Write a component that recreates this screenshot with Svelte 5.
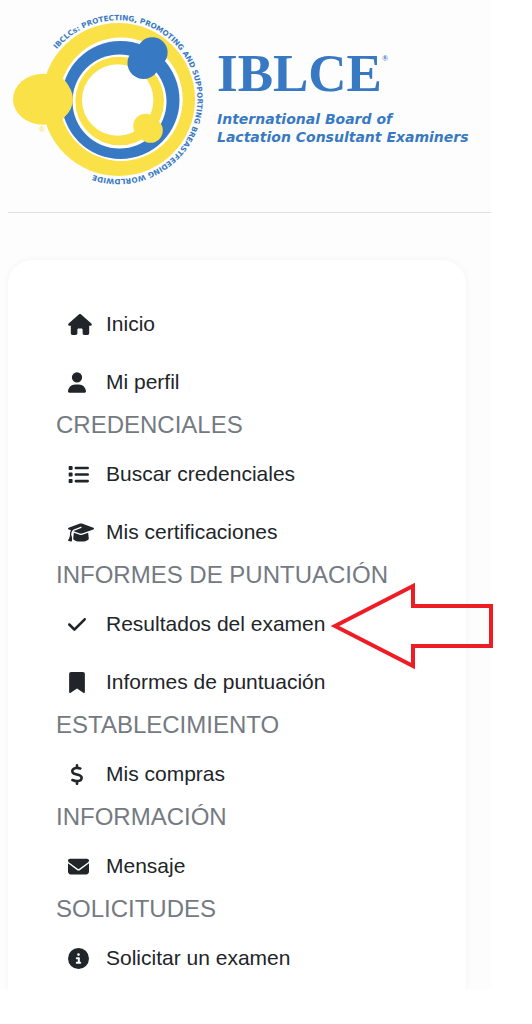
<script>
  const icons = {
    house: { w: 576, d: "M575.8 255.5c0 18-15 32.1-32 32.1h-32l.7 160.2c0 2.7-.2 5.4-.5 8.1V472c0 22.1-17.9 40-40 40H456c-1.1 0-2.2 0-3.3-.1c-1.4 .1-2.8 .1-4.2 .1H416 392c-22.1 0-40-17.9-40-40V448 384c0-17.7-14.3-32-32-32H256c-17.7 0-32 14.3-32 32v64 24c0 22.1-17.9 40-40 40H160 128.1c-1.5 0-3-.1-4.5-.2c-1.2 .1-2.4 .2-3.6 .2H104c-22.1 0-40-17.9-40-40V360c0-.9 0-1.9 .1-2.8V287.6H32c-18 0-32-14-32-32.1c0-9 3-17 10-24L266.4 8c7-7 15-8 22-8s15 2 21 7L564.8 231.5c8 7 12 15 11 24z" },
    user: { w: 448, d: "M224 256A128 128 0 1 0 224 0a128 128 0 1 0 0 256zm-45.7 48C79.8 304 0 383.8 0 482.3C0 498.7 13.3 512 29.7 512H418.3c16.4 0 29.7-13.3 29.7-29.7C448 383.8 368.2 304 269.7 304H178.3z" },
    list: { w: 512, d: "M40 48C26.7 48 16 58.7 16 72v48c0 13.3 10.7 24 24 24H88c13.3 0 24-10.7 24-24V72c0-13.3-10.7-24-24-24H40zM192 64c-17.7 0-32 14.3-32 32s14.3 32 32 32H480c17.7 0 32-14.3 32-32s-14.3-32-32-32H192zm0 160c-17.7 0-32 14.3-32 32s14.3 32 32 32H480c17.7 0 32-14.3 32-32s-14.3-32-32-32H192zm0 160c-17.7 0-32 14.3-32 32s14.3 32 32 32H480c17.7 0 32-14.3 32-32s-14.3-32-32-32H192zM16 232v48c0 13.3 10.7 24 24 24H88c13.3 0 24-10.7 24-24V232c0-13.3-10.7-24-24-24H40c-13.3 0-24 10.7-24 24zM40 368c-13.3 0-24 10.7-24 24v48c0 13.3 10.7 24 24 24H88c13.3 0 24-10.7 24-24V392c0-13.3-10.7-24-24-24H40z" },
    cap: { w: 640, d: "M320 32c-8.1 0-16.1 1.4-23.7 4.1L15.8 137.4C6.3 140.9 0 149.9 0 160s6.3 19.1 15.8 22.6l57.9 20.9C57.3 229.3 48 259.8 48 291.9v28.1c0 28.4-10.8 57.7-22.3 80.8c-6.5 13-13.9 25.8-22.5 37.6C0 442.7-.9 448.3 .9 453.4s6 8.9 11.2 10.2l64 16c4.2 1.1 8.7 .3 12.4-2s6.3-6.1 7.1-10.4c8.6-42.8 4.3-81.2-2.1-108.7C90.3 344.3 86 329.8 80 316.5V291.9c0-30.2 10.2-58.7 27.9-81.5c12.9-15.5 29.6-28 49.2-35.7l157-61.7c8.2-3.2 17.5 .8 20.7 9s-.8 17.5-9 20.7l-157 61.7c-12.4 4.9-23.3 12.4-32.2 21.6l159.6 57.6c7.6 2.7 15.6 4.1 23.7 4.1s16.1-1.4 23.7-4.1L624.2 182.6c9.5-3.4 15.8-12.5 15.8-22.6s-6.3-19.1-15.8-22.6L343.7 36.1C336.1 33.4 328.1 32 320 32zM128 408c0 35.3 86 72 192 72s192-36.7 192-72L496.7 262.6 354.5 314c-11.1 4-22.8 6-34.5 6s-23.5-2-34.5-6L143.3 262.6 128 408z" },
    check: { w: 448, d: "M438.6 105.4c12.5 12.5 12.5 32.8 0 45.3l-256 256c-12.5 12.5-32.8 12.5-45.3 0l-128-128c-12.5-12.5-12.5-32.8 0-45.3s32.8-12.5 45.3 0L160 338.7 393.4 105.4c12.5-12.5 32.8-12.5 45.3 0z" },
    bookmark: { w: 384, d: "M0 48V487.7C0 501.1 10.9 512 24.3 512c5 0 9.9-1.5 14-4.4L192 400 345.7 507.6c4.1 2.9 9 4.4 14 4.4c13.4 0 24.3-10.9 24.3-24.3V48c0-26.5-21.5-48-48-48H48C21.5 0 0 21.5 0 48z" },
    dollar: { w: 320, d: "M160 0c17.7 0 32 14.3 32 32V67.7c1.6 .2 3.1 .4 4.7 .7c.4 .1 .7 .1 1.1 .2l48 8.8c17.4 3.2 28.9 19.9 25.7 37.2s-19.9 28.9-37.2 25.7l-47.5-8.7c-31.3-4.6-58.9-1.5-78.3 6.2s-27.2 18.3-29 28.1c-2 10.7-.5 16.7 1.2 20.4c1.8 3.9 5.5 8.3 12.8 13.2c16.3 10.7 41.3 17.7 73.7 26.3l2.9 .8c28.6 7.6 63.6 16.8 89.6 33.8c14.2 9.3 27.6 21.9 35.9 39.5c8.5 17.9 10.3 37.9 6.4 59.2c-6.9 38-33.1 63.4-65.6 76.7c-13.7 5.6-28.6 9.2-44.4 11V480c0 17.7-14.3 32-32 32s-32-14.3-32-32V445.1c-.4-.1-.9-.1-1.3-.2l-.2 0 0 0c-24.4-3.8-64.5-14.3-91.5-26.3c-16.1-7.2-23.4-26.1-16.2-42.2s26.1-23.4 42.2-16.2c20.9 9.3 55.3 18.5 75.2 21.6c31.9 4.7 58.2 2 76-5.3c16.9-6.9 24.6-16.9 26.8-28.9c1.9-10.6 .4-16.7-1.3-20.4c-1.9-4-5.6-8.4-13-13.3c-16.4-10.7-41.5-17.7-74-26.3l-2.8-.7 0 0C119.4 279.3 84.4 270 58.4 253c-14.2-9.3-27.5-22-35.8-39.6c-8.4-17.9-10.1-37.9-6.1-59.2C23.7 116 52.3 91.2 84.8 78.3c13.3-5.3 27.9-8.9 43.2-11V32c0-17.7 14.3-32 32-32z" },
    envelope: { w: 512, d: "M48 64C21.5 64 0 85.5 0 112c0 15.1 7.1 29.3 19.2 38.4L236.8 313.6c11.4 8.5 27 8.5 38.4 0L492.8 150.4c12.1-9.1 19.2-23.3 19.2-38.4c0-26.5-21.5-48-48-48H48zM0 176V384c0 35.3 28.7 64 64 64H448c35.3 0 64-28.7 64-64V176L294.4 339.2c-22.8 17.1-54 17.1-76.8 0L0 176z" },
    info: { w: 512, d: "M256 512A256 256 0 1 0 256 0a256 256 0 1 0 0 512zM216 336h24V272H216c-13.3 0-24-10.7-24-24s10.7-24 24-24h48c13.3 0 24 10.7 24 24v88h8c13.3 0 24 10.7 24 24s-10.7 24-24 24H216c-13.3 0-24-10.7-24-24s10.7-24 24-24zm40-208a32 32 0 1 1 0 64 32 32 0 1 1 0-64z" },
  };

  const groups = [
    { items: [{ icon: "house", label: "Inicio" }, { icon: "user", label: "Mi perfil" }] },
    { title: "CREDENCIALES", items: [{ icon: "list", label: "Buscar credenciales" }, { icon: "cap", label: "Mis certificaciones" }] },
    { title: "INFORMES DE PUNTUACIÓN", items: [{ icon: "check", label: "Resultados del examen", marked: true }, { icon: "bookmark", label: "Informes de puntuación" }] },
    { title: "ESTABLECIMIENTO", items: [{ icon: "dollar", label: "Mis compras" }] },
    { title: "INFORMACIÓN", items: [{ icon: "envelope", label: "Mensaje" }] },
    { title: "SOLICITUDES", items: [{ icon: "info", label: "Solicitar un examen" }] },
  ];

  // narrow icons are centred in an 18px box
  const iconWidth = (w) => Math.max(18, Math.round((w / 512) * 21));
</script>

<div class="page">
  <header>
    <svg class="emblem" width="200" height="200" viewBox="8 0 200 200" aria-hidden="true">
      <circle cx="118.5" cy="99.5" r="76.5" fill="#fae148" />
      <circle cx="121" cy="99.3" r="61.7" fill="#fff" />
      <circle cx="120.5" cy="100" r="59" fill="#3879c3" />
      <circle cx="119.5" cy="101.5" r="47" fill="#fff" />
      <ellipse cx="43" cy="99.3" rx="30" ry="25.5" fill="#fae148" />
      <path d="M50 75C60 74 66 80 69 87L66 115C60 122 54 124 48 124Z" fill="#fae148" />
      <circle cx="119.7" cy="101" r="46" fill="#fff" />
      <circle cx="119.7" cy="101" r="44.3" fill="#fae148" />
      <circle cx="117.7" cy="100" r="35.7" fill="#fff" />
      <circle cx="152.3" cy="52.5" r="15.3" fill="#3879c3" />
      <circle cx="143.5" cy="63" r="16" fill="#3879c3" />
      <circle cx="145.5" cy="126" r="12.3" fill="#fae148" />
      <circle cx="150.5" cy="130.5" r="12.3" fill="#fae148" />
      <!-- the motto ring is drawn on a grid three times as fine -->
      <svg width="208" height="200" viewBox="0 0 624 600">
        <path id="motto" d="M170 148A238 238 0 1 1 277 524" fill="none" />
        <text class="motto"><textPath href="#motto">IBCLCs: PROTECTING, PROMOTING AND SUPPORTING BREASTFEEDING WORLDWIDE</textPath></text>
      </svg>
      <text class="reg" x="39" y="132">®</text>
    </svg>
    <div class="wordmark">
      <div class="name">IBLCE<sup>®</sup></div>
      <div class="tagline">International Board of<br />Lactation Consultant Examiners</div>
    </div>
  </header>

  <nav>
    {#each groups as group}
      {#if group.title}
        <h2>{group.title}</h2>
      {/if}
      <ul>
        {#each group.items as item}
          <li>
            <a href="#{item.icon}">
              <span class="icon">
                <svg width={iconWidth(icons[item.icon].w)} height="21" viewBox="0 0 {icons[item.icon].w} 512" aria-hidden="true">
                  <path d={icons[item.icon].d} />
                </svg>
              </span>
              <span class="label">
                {item.label}
                {#if item.marked}
                  <svg class="arrow" width="164" height="88" viewBox="0 0 164 88" aria-hidden="true">
                    <path d="M5 44L83 4V24H161V64H83V84Z" />
                  </svg>
                {/if}
              </span>
            </a>
          </li>
        {/each}
      </ul>
    {/each}
  </nav>
</div>

<style>
  :global(body) {
    margin: 0;
    background: #fff;
  }

  .page {
    margin-right: 41px;
    padding-left: 8px;
    background: #fdfdfd;
    font-family: "Liberation Sans", Arial, sans-serif;
    overflow: clip;
    overflow-clip-margin: 8px;
  }

  header {
    display: flex;
    height: 212px;
    margin-bottom: 47px;
    border-bottom: 1px solid #dfdfe6;
    color: #3879c3;
  }

  .emblem {
    flex: none;
  }

  .motto {
    font: bold 22px "DejaVu Sans", Verdana, sans-serif;
    fill: #3879c3;
  }

  .reg {
    font: 8px "Liberation Sans", Arial, sans-serif;
    fill: #fae148;
  }

  .wordmark {
    padding: 43px 0 0 9px;
    white-space: nowrap;
  }

  .name {
    font: bold 53px/60px "Liberation Serif", "Times New Roman", serif;
  }

  .name sup {
    font-size: 8px;
    line-height: 8px;
    vertical-align: 30px;
  }

  .tagline {
    margin-top: 7px;
    font: italic bold 14px/18px "DejaVu Sans", Verdana, sans-serif;
  }

  nav {
    margin-right: 25px;
    padding: 35px 48px 2px;
    border-radius: 24px 24px 0 0;
    background: #fff;
    box-shadow: 0 0 6px rgba(0, 0, 0, 0.05);
  }

  h2 {
    margin: 0 0 6px;
    font-size: 24px;
    font-weight: normal;
    line-height: 28px;
    color: #747a82;
  }

  ul {
    margin: 0;
    padding: 0;
    list-style: none;
  }

  a {
    display: flex;
    align-items: center;
    height: 58px;
    padding-left: 12px;
    font-size: 21px;
    color: #212529;
    text-decoration: none;
  }

  .icon {
    display: flex;
    flex: none;
    width: 38px;
    fill: #212529;
  }

  .label {
    position: relative;
    white-space: nowrap;
  }

  .arrow {
    position: absolute;
    left: 100%;
    top: 50%;
    margin: -42px 0 0 5px;
    fill: none;
    stroke: #ee1c25;
    stroke-width: 4;
  }
</style>
